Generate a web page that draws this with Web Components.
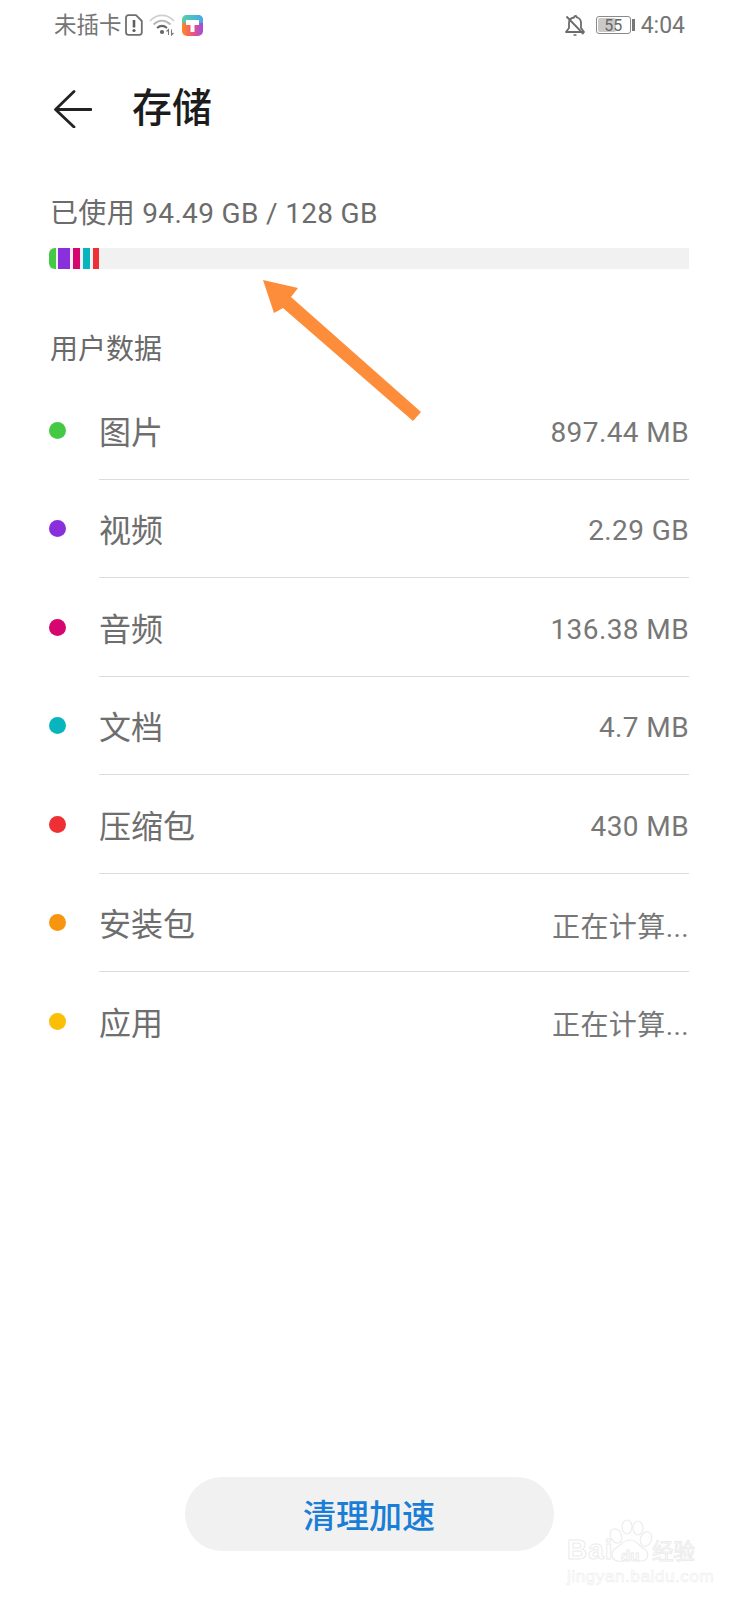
<!DOCTYPE html>
<html lang="zh">
<head>
<meta charset="utf-8">
<title>存储</title>
<style>
  html, body { margin: 0; padding: 0; background: #fff; }
  body { width: 738px; height: 1600px; font-family: Roboto, "Noto Sans CJK SC", sans-serif; color: #6e6e6e; }
  storage-page { display: block; }
</style>
</head>
<body>
<storage-page>
  <status-bar></status-bar>
  <title-bar>存储</title-bar>
  <usage-bar label="已使用 94.49 GB / 128 GB"></usage-bar>
  <section-title>用户数据</section-title>
  <storage-row color="#44c945" value="897.44 MB">图片</storage-row>
  <storage-row color="#8a2fdc" value="2.29 GB">视频</storage-row>
  <storage-row color="#d6056f" value="136.38 MB">音频</storage-row>
  <storage-row color="#08b5bf" value="4.7 MB">文档</storage-row>
  <storage-row color="#ee2f33" value="430 MB">压缩包</storage-row>
  <storage-row color="#f8950f" value="正在计算...">安装包</storage-row>
  <storage-row color="#fcbf08" value="正在计算..." last>应用</storage-row>
  <clean-button>清理加速</clean-button>
</storage-page>
<arrow-mark></arrow-mark>
<baidu-mark></baidu-mark>

<script>
const cjk = 'Roboto, "Noto Sans CJK SC", sans-serif';

// petit helper pour eviter de repeter attachShadow partout
class Base extends HTMLElement {
    render(html) {
        if (!this.shadowRoot) this.attachShadow({ mode: "open" });
        this.shadowRoot.innerHTML = html;
    }
}

class StatusBar extends Base {
    connectedCallback() {
        this.render(`
        <style>
        :host{display:flex; align-items:center; justify-content:space-between; height:50px; padding:0 53px 0 54px; color:#757575; font-family:${cjk};}
        .side{display:flex; align-items:center;}
        .carrier{font-size:22.5px; line-height:50px;}
        .time{font-size:23px; margin-left:6px;}
        svg{display:block;}
        .batt{position:relative; width:35px; height:18px; border:1px solid #8a8a8a; border-radius:3px; box-sizing:border-box; display:flex; align-items:center; justify-content:center; font-size:16px; color:#666; margin-left:11px;}
        .batt i{position:absolute; left:1px; top:1px; bottom:1px; width:55%; background:#c9c9c9; border-radius:2px;}
        .batt span{position:relative;}
        .nub{width:3px; height:12px; background:#777; margin-left:1px;}
        </style>
        <div class="side">
          <span class="carrier">未插卡</span>
          <svg width="18" height="22" viewBox="0 0 18 22" style="margin-left:3px" fill="none">
            <path d="M3.500 1.200h7.500l5.800 5.800v11.300a2.500 2.500 0 0 1-2.500 2.500H3.500a2.500 2.500 0 0 1-2.500-2.500V3.700a2.500 2.500 0 0 1 2.500-2.500z" stroke="#6f6f6f" stroke-width="1.800" stroke-linejoin="round"/>
            <path d="M9 6v7.500" stroke="#5f5f5f" stroke-width="2.600"/><circle cx="9" cy="16.500" r="1.600" fill="#5f5f5f"/>
          </svg>
          <svg width="26" height="22" viewBox="0 0 26 22" style="margin-left:6px" fill="none">
            <path d="M1 7c7-7.500 17-7.500 24 0" stroke="#cfcfcf" stroke-width="1.600"/>
            <path d="M4.500 10.500c5.500-5 11.500-5 17 0" stroke="#b5b5b5" stroke-width="1.800"/>
            <path d="M8 14c3.300-2.800 6.700-2.800 10 0" stroke="#666" stroke-width="2"/>
            <circle cx="13" cy="18" r="2.100" fill="#666"/>
            <path d="M19.500 21v-5.500l-2 2M22.500 15.500V21l2-2" stroke="#777" stroke-width="1.100"/>
          </svg>
          <svg width="21" height="21" viewBox="0 0 21 21" style="margin-left:7px">
            <defs><linearGradient id="tile" x1="0" y1="0" x2="1" y2="0">
              <stop offset="0" stop-color="#ff8a1e"/><stop offset=".5" stop-color="#f0557a"/><stop offset="1" stop-color="#9a4fe0"/>
            </linearGradient><linearGradient id="top" x1="0" y1="0" x2="1" y2="0">
              <stop offset="0" stop-color="#52d3a8"/><stop offset="1" stop-color="#45a8ea"/>
            </linearGradient></defs>
            <rect width="21" height="21" rx="5" fill="url(#tile)"/>
            <path d="M0 5a5 5 0 0 1 5-5h11a5 5 0 0 1 5 5v3H0z" fill="url(#top)"/>
            <path d="M4 5h13v5h-4.500v7h-4v-7H4z" fill="#fff"/>
          </svg>
        </div>
        <div class="side">
          <svg width="20" height="21" viewBox="0 0 20 21" fill="none" stroke="#6b6b6b" stroke-width="1.800" stroke-linejoin="round">
            <path d="M1 17h18l-3-4V8c0-3-2-5-4-5.500-.5-2-2.500-2-3 0C6 3 4 5 4 8v5z"/>
            <path d="M1.500 1.500l17 17.500"/><path d="M8.500 20h3" stroke-width="1.500"/>
          </svg>
          <div class="batt"><i></i><span>55</span></div><div class="nub"></div>
          <span class="time">4:04</span>
        </div>`);
    }
}

class TitleBar extends Base {
    connectedCallback() {
        this.render(`
        <style>
        :host{display:flex; align-items:center; height:118px; padding-left:54px; font-family:${cjk};}
        svg{display:block;}
        .t{font-size:40px; font-weight:500; color:#1c1c1c; margin-left:40px; line-height:50px;}
        </style>
        <svg width="38" height="38" viewBox="0 0 38 38" fill="none" stroke="#222" stroke-width="2.800" stroke-linecap="round" stroke-linejoin="round">
          <path d="M20 1.500L1.500 19.500 20 37M2 19.500h35"/>
        </svg>
        <div class="t"><slot></slot></div>`);
    }
}

class UsageBar extends Base {
    connectedCallback() {
        this.render(`
        <style>
        :host{display:block; padding:26px 49px 0 50px; font-family:${cjk};}
        .l{font-size:28px; line-height:40px; color:#6c6c6c; letter-spacing:.33px;}
        .bar{display:flex; height:21px; background:#f1f1f1; margin:14px 0 0 -1px;}
        .bar i{display:block; height:100%;}
        </style>
        <div class="l">${this.getAttribute("label")}</div>
        <div class="bar">
          <i style="width:7px;background:#44c945;border-radius:6px 0 0 6px"></i>
          <i style="width:12px;margin-left:2px;background:#8a2fdc"></i>
          <i style="width:7px;margin-left:3px;background:#d6056f"></i>
          <i style="width:7px;margin-left:3px;background:#08b5bf"></i>
          <i style="width:6px;margin-left:3px;background:#ee2f33"></i>
        </div>`);
    }
}

class SectionTitle extends Base {
    connectedCallback() {
        this.render(`
        <style>
        :host{display:block; padding:61px 0 11px 50px; font-family:${cjk}; font-size:28px; line-height:40px; color:#6a6a6a;}
        </style>
        <slot></slot>`);
    }
}

class StorageRow extends Base {
    connectedCallback() {
        const line = this.hasAttribute("last") ? "transparent" : "#dcdcdc";
        this.render(`
        <style>
        :host{display:flex; height:98.5px; padding-left:49px; font-family:${cjk}; box-sizing:border-box;}
        .dot{flex:none; width:17px; height:17px; border-radius:50%; align-self:center; margin-right:33px; background:${this.getAttribute("color")};}
        .body{flex:1; display:flex; align-items:center; justify-content:space-between; margin-right:49px; border-bottom:1px solid ${line}; box-sizing:border-box;}
        .name{font-size:32px; color:#6e6e6e;}
        .val{font-size:28px; color:#777; letter-spacing:.4px; margin-top:5px;}
        </style>
        <div class="dot"></div>
        <div class="body"><span class="name"><slot></slot></span><span class="val">${this.getAttribute("value")}</span></div>`);
    }
}

class CleanButton extends Base {
    connectedCallback() {
        this.render(`
        <style>
        :host{display:flex; justify-content:center; margin-top:406px;}
        button{width:369px; height:74px; border:0; border-radius:37px; background:#f1f1f1; color:#1a7ed6; font-family:${cjk}; font-size:33px; font-weight:500; padding:0;}
        </style>
        <button><slot></slot></button>`);
    }
}

// fleche orange posee par dessus la capture
class ArrowMark extends Base {
    connectedCallback() {
        this.render(`
        <style>:host{position:absolute; left:0; top:0; width:738px; height:460px; pointer-events:none;}</style>
        <svg width="738" height="460" viewBox="0 0 738 460">
          <path d="M263 280L298 288 291 297 421 412 413 421 283 308 274 313z" fill="#fd8d3a"/>
        </svg>`);
    }
}

// filigrane baidu en bas a droite
class BaiduMark extends Base {
    connectedCallback() {
        this.render(`
        <style>
        :host{position:absolute; left:553px; top:1503px; width:170px; height:85px; font-family:"Liberation Sans",sans-serif; pointer-events:none;}
        span{position:absolute; color:#fff; -webkit-text-stroke:1px #ececec; white-space:nowrap; line-height:1;}
        .b{left:14px; top:33px; font-size:28px; font-weight:700; letter-spacing:1px;}
        .d{left:68px; top:45px; font-size:15px; font-weight:700;}
        .j{font-family:"Noto Sans CJK SC",sans-serif; left:99px; top:36px; font-size:21.5px;}
        .u{left:14px; top:65px; font-size:17px; letter-spacing:.6px; -webkit-text-stroke:.6px #eeeeee;}
        svg{position:absolute; left:0; top:0;}
        </style>
        <svg width="170" height="85" viewBox="0 0 170 85" fill="#fff" stroke="#ececec" stroke-width="1.200">
          <ellipse cx="63" cy="33" rx="5.500" ry="7.500" transform="rotate(-25 63 33)"/>
          <ellipse cx="74" cy="24" rx="5" ry="7"/>
          <ellipse cx="85" cy="25" rx="5" ry="7"/>
          <ellipse cx="93" cy="36" rx="5.500" ry="7.500" transform="rotate(20 93 36)"/>
          <path d="M77 37c7 0 8 5 13 8 7 4 6 13-2 13-4 0-7-1-11-1s-8 2-12 1c-7-1-8-9-2-13 5-3 7-8 14-8z"/>
        </svg>
        <span class="b">Bai</span><span class="d">du</span><span class="j">经验</span><span class="u">jingyan.baidu.com</span>`);
    }
}

customElements.define("status-bar", StatusBar);
customElements.define("title-bar", TitleBar);
customElements.define("usage-bar", UsageBar);
customElements.define("section-title", SectionTitle);
customElements.define("storage-row", StorageRow);
customElements.define("clean-button", CleanButton);
customElements.define("arrow-mark", ArrowMark);
customElements.define("baidu-mark", BaiduMark);
customElements.define("storage-page", class extends HTMLElement {
    connectedCallback() {
        this.attachShadow({ mode: "open" }).innerHTML = `<style>:host{display:block;}</style><slot></slot>`;
    }
});
</script>
</body>
</html>
